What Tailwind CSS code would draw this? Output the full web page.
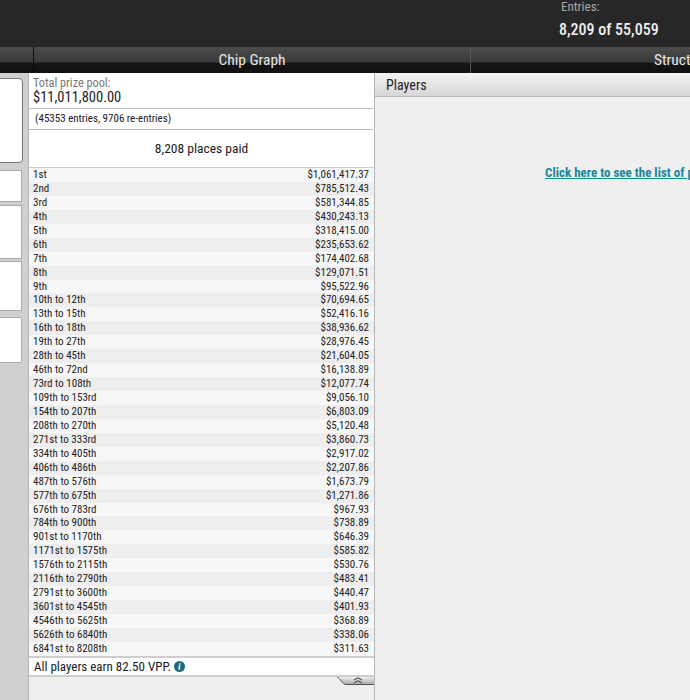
<!DOCTYPE html>
<html lang="en">
<head>
    <meta charset="UTF-8">
    <title>Tournament lobby</title>
    <script src="https://cdn.jsdelivr.net/npm/@tailwindcss/browser@4"></script>
</head>
<body class="w-[690px] h-[700px] overflow-hidden bg-[#efefef] font-['Roboto_Condensed','Roboto',sans-serif] text-[#1c1c1c]">

    <!-- Top bar -->
    <div class="h-[47px] bg-[#272727] flex justify-end">
        <div class="w-[131px] shrink-0">
            <p class="text-[13px] leading-[14px] text-[#a9a9a9] pl-[2px]">Entries:</p>
            <p class="mt-[8px] text-[16px] leading-[16px] font-medium text-[#f0f0f0] whitespace-nowrap">8,209 of 55,059</p>
        </div>
    </div>

    <!-- Tabs -->
    <div class="flex h-[26px] bg-[linear-gradient(#4c4c4c_0,#3a3a3a_15px,#151515_16px,#111_26px)] text-[#e8e8e8] text-[15.5px] leading-[26px]">
        <div class="w-[34px] shrink-0 border-r border-[#0c0c0c]"></div>
        <div class="w-[437px] shrink-0 border-r border-[#555] text-center">Chip Graph</div>
        <div class="flex-1 min-w-0 pl-[183px] whitespace-nowrap overflow-hidden">Structure</div>
    </div>

    <div class="flex h-[627px]">
        <!-- Left side cards -->
        <div class="w-[28px] shrink-0 bg-[#cfcfcf] flex flex-col">
            <div class="h-[85px] mt-[5px] -ml-[4px] w-[27px] bg-white border border-[#777] rounded-[4px]"></div>
            <div class="h-[32px] mt-[7px] w-[22px] bg-white border border-[#aaa] border-l-0"></div>
            <div class="h-[54px] mt-[3px] w-[22px] bg-white border border-[#aaa] border-l-0"></div>
            <div class="h-[50px] mt-[2px] w-[22px] bg-white border border-[#aaa] border-l-0"></div>
            <div class="h-[46px] mt-[6px] w-[22px] bg-white border border-[#aaa] border-l-0"></div>
        </div>

        <!-- Prize panel -->
        <div class="w-[347px] shrink-0 border-x border-[#b5b5b5] flex flex-col">
            <div class="bg-white">
                <div class="h-[36px] pl-[4px] border-b border-[#bbb] mr-[1px]">
                    <p class="text-[12.25px] leading-[14px] pt-[3px] text-[#777]">Total prize pool:</p>
                    <p class="text-[14.5px] leading-[16px]">$11,011,800.00</p>
                </div>
                <div class="h-[21px] pl-[6px] border-b border-[#bbb] text-[11px] leading-[19px] mr-[1px]">(45353 entries, 9706 re-entries)</div>
                <div class="h-[37px] text-center text-[13.5px] leading-[37px]">8,208 places paid</div>
            </div>
            <div id="payouts" class="border-t border-b-2 border-[#cfcfcf] bg-white text-[11px] leading-[14px] text-[#222]">
            </div>
            <div class="h-[19px] bg-white pl-[5px] pt-[1px] text-[13px] leading-[16px] flex items-center gap-[3px] border-b-2 border-[#cfcfcf]">
                <span>All players earn 82.50 VPP.</span>
                <svg class="w-[11px] h-[11px]" viewBox="0 0 11 11"><circle cx="5.5" cy="5.5" r="5.5" fill="#1d6a80"/><path d="M4.6 4.6h1.9l-.7 3.2h.8l-.2.8H4.2l.6-3.2h-.4zM5.3 2.2h1.5l-.3 1.5H5z" fill="#fff"/></svg>
            </div>
            <div class="flex justify-end">
                <!-- Collapse tab -->
                <svg class="w-[38px] h-[9px]" viewBox="0 0 38 9" fill="none">
                    <defs><linearGradient id="tab" x1="0" y1="0" x2="0" y2="1"><stop offset="0" stop-color="#efefef"/><stop offset="1" stop-color="#a8a8a8"/></linearGradient></defs>
                    <path d="M1 0 C5 1 5 7.5 11 7.5 H38 V0z" fill="url(#tab)"/>
                    <path d="M1 0 C5 1 5 7.5 11 7.5 H38" stroke="#555"/>
                    <path d="M18 3 22 .8 26 3M18 6 22 3.8 26 6" stroke="#333"/>
                </svg>
            </div>
        </div>

        <!-- Players panel -->
        <div class="flex-1 min-w-0 overflow-hidden">
            <div class="h-[24px] bg-[linear-gradient(#f4f4f4,#d6d6d6)] border-b border-[#bbb] pl-[11px] text-[14px] leading-[24px]">Players</div>
            <p class="mt-[68px] pl-[170px] whitespace-nowrap text-[13px] leading-[16px] font-bold text-[#1a8596] underline">Click here to see the list of players</p>
        </div>
    </div>

    <script>
        // Payout table, one row per paid place range
        const payouts = [
            ['1st', '$1,061,417.37'], ['2nd', '$785,512.43'], ['3rd', '$581,344.85'], ['4th', '$430,243.13'],
            ['5th', '$318,415.00'], ['6th', '$235,653.62'], ['7th', '$174,402.68'], ['8th', '$129,071.51'],
            ['9th', '$95,522.96'], ['10th to 12th', '$70,694.65'], ['13th to 15th', '$52,416.16'],
            ['16th to 18th', '$38,936.62'], ['19th to 27th', '$28,976.45'], ['28th to 45th', '$21,604.05'],
            ['46th to 72nd', '$16,138.89'], ['73rd to 108th', '$12,077.74'], ['109th to 153rd', '$9,056.10'],
            ['154th to 207th', '$6,803.09'], ['208th to 270th', '$5,120.48'], ['271st to 333rd', '$3,860.73'],
            ['334th to 405th', '$2,917.02'], ['406th to 486th', '$2,207.86'], ['487th to 576th', '$1,673.79'],
            ['577th to 675th', '$1,271.86'], ['676th to 783rd', '$967.93'], ['784th to 900th', '$738.89'],
            ['901st to 1170th', '$646.39'], ['1171st to 1575th', '$585.82'], ['1576th to 2115th', '$530.76'],
            ['2116th to 2790th', '$483.41'], ['2791st to 3600th', '$440.47'], ['3601st to 4545th', '$401.93'],
            ['4546th to 5625th', '$368.89'], ['5626th to 6840th', '$338.06'], ['6841st to 8208th', '$311.63']
        ];
        const table = document.getElementById('payouts');
        payouts.forEach(([place, amount], i) => {
            const row = document.createElement('div');
            row.className = i % 2 ? 'flex justify-between h-[13.943px] pr-[5px] pl-[4px] bg-[#eeeeee]' : 'flex justify-between h-[13.943px] pr-[5px] pl-[4px] bg-[#f7f7f7]';
            row.innerHTML = `<span>${place}</span><span>${amount}</span>`;
            table.appendChild(row);
        });
    </script>
</body>
</html>
